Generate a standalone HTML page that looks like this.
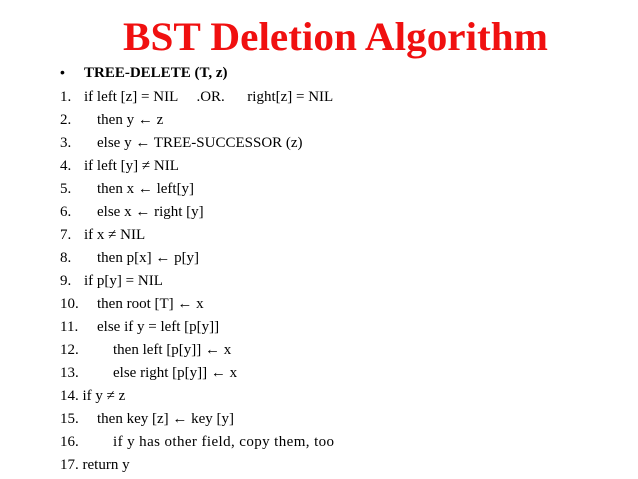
<!DOCTYPE html>
<html><head><meta charset="utf-8"><style>
body{margin:0;width:638px;height:479px;background:#fff;position:relative;overflow:hidden;font-family:"Liberation Serif",serif;color:#000}
h1{position:absolute;left:123px;top:13px;margin:0;white-space:nowrap;font:bold 40px "Liberation Serif",serif;color:#f01010;transform-origin:0 0;transform:scaleX(1.03)}
.l{position:absolute;font-size:15px;white-space:pre;line-height:16px}
.n{position:absolute;left:60px}
</style></head><body>
<h1>BST Deletion Algorithm</h1>
<div class="l" style="left:60px;top:64px;font-family:'Liberation Sans',sans-serif;font-size:14px">•</div>
<div class="l" style="left:84px;top:65px;font-weight:bold">TREE-DELETE (T, z)</div>
<div class="l" style="top:89px;left:0"><span class="n">1.</span><span style="position:absolute;left:84px">if left [z] = NIL     .OR.      right[z] = NIL</span></div>
<div class="l" style="top:112px;left:0"><span class="n">2.</span><span style="position:absolute;left:97px">then y ← z</span></div>
<div class="l" style="top:135px;left:0"><span class="n">3.</span><span style="position:absolute;left:97px">else y ← TREE-SUCCESSOR (z)</span></div>
<div class="l" style="top:158px;left:0"><span class="n">4.</span><span style="position:absolute;left:84px">if left [y] ≠ NIL</span></div>
<div class="l" style="top:181px;left:0"><span class="n">5.</span><span style="position:absolute;left:97px">then x ← left[y]</span></div>
<div class="l" style="top:204px;left:0"><span class="n">6.</span><span style="position:absolute;left:97px">else x ← right [y]</span></div>
<div class="l" style="top:227px;left:0"><span class="n">7.</span><span style="position:absolute;left:84px">if x ≠ NIL</span></div>
<div class="l" style="top:250px;left:0"><span class="n">8.</span><span style="position:absolute;left:97px">then p[x] ← p[y]</span></div>
<div class="l" style="top:273px;left:0"><span class="n">9.</span><span style="position:absolute;left:84px">if p[y] = NIL</span></div>
<div class="l" style="top:296px;left:0"><span class="n">10.</span><span style="position:absolute;left:97px">then root [T] ← x</span></div>
<div class="l" style="top:319px;left:0"><span class="n">11.</span><span style="position:absolute;left:97px">else if y = left [p[y]]</span></div>
<div class="l" style="top:342px;left:0"><span class="n">12.</span><span style="position:absolute;left:113px">then left [p[y]] ← x</span></div>
<div class="l" style="top:365px;left:0"><span class="n">13.</span><span style="position:absolute;left:113px">else right [p[y]] ← x</span></div>
<div class="l" style="top:388px;left:60px">14. if y ≠ z</div>
<div class="l" style="top:411px;left:0"><span class="n">15.</span><span style="position:absolute;left:97px">then key [z] ← key [y]</span></div>
<div class="l" style="top:434px;left:0"><span class="n">16.</span><span style="position:absolute;left:113px;letter-spacing:0.4px">if y has other field, copy them, too</span></div>
<div class="l" style="top:457px;left:60px">17. return y</div>
</body></html>
